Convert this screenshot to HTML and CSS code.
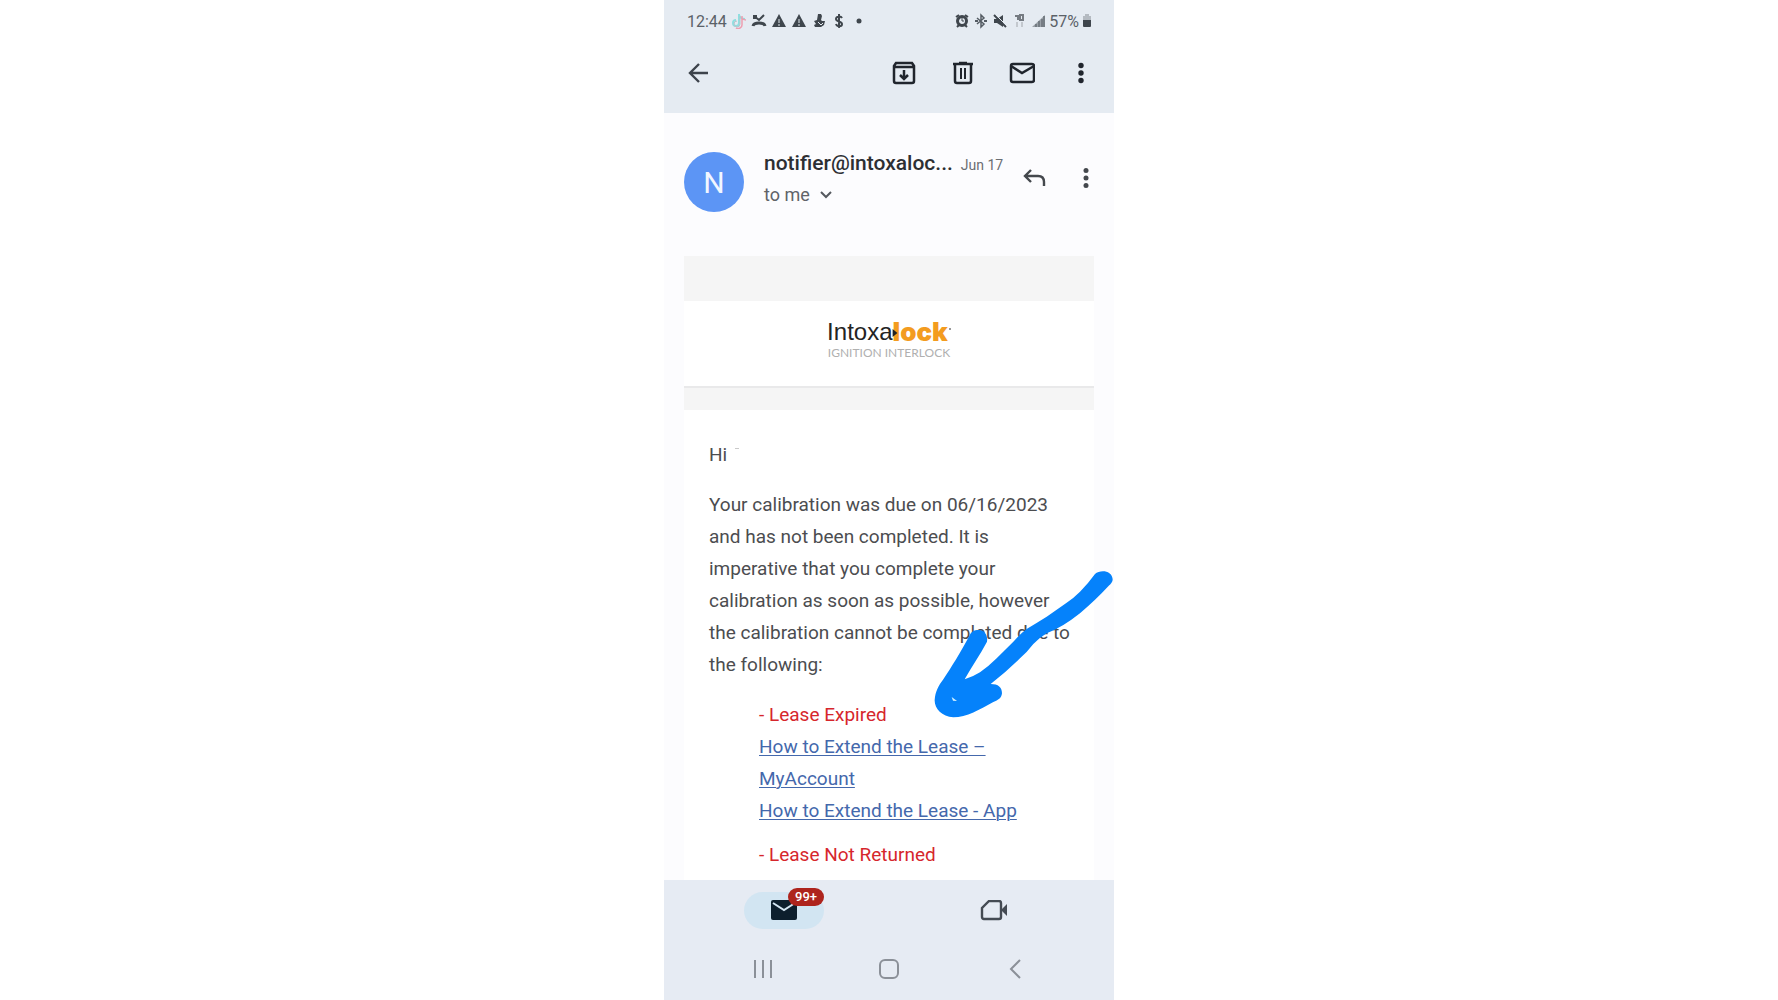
FILE: index.html
```html
<!DOCTYPE html>
<html lang="en">
<head>
<meta charset="utf-8">
<meta name="viewport" content="width=device-width, initial-scale=1">
<title>Mail</title>
<link rel="stylesheet" href="styles.css">
</head>
<body>
<div class="phone">
  <header class="top">
    <div class="status">
      <div class="status-group">
        <time class="clock">12:44</time>
        <svg class="sicon" viewBox="0 0 16 16" fill="none" stroke-width="2"><path d="M8 1v9a3 3 0 1 1-3-3M8 2c1 3 3 4 6 4" stroke="#8edfe0"/><path d="M11 3v8a4 4 0 0 1-6 4M11 5c1 2 2 2 4 2" stroke="#ee9eb0" stroke-width="1.500"/><path d="M9 3v8a3 3 0 1 1-3-3" stroke="#b9c4cc" stroke-width="1"/></svg>
        <svg class="sicon" viewBox="0 0 16 16" fill="none" stroke="#3f464d" stroke-width="2"><path d="M3 3l5 4 5-5M3 6V3h3"/><path d="M2 13c1-4 11-4 12 0" stroke-width="3"/></svg>
        <svg class="sicon" viewBox="0 0 16 16"><path d="M8 1l7 13H1z" fill="#3f464d"/><path d="M8 6v4M8 11v2" stroke="#e5ebf2" stroke-width="1"/></svg>
        <svg class="sicon" viewBox="0 0 16 16"><path d="M8 1l7 13H1z" fill="#3f464d"/><path d="M8 6v4M8 11v2" stroke="#e5ebf2" stroke-width="1"/></svg>
        <svg class="sicon" viewBox="0 0 16 16" fill="#3f464d"><path d="M7 1h3l1 2-1 4 1 1h3l-1 4-3 2H4l-1-2 2-1-2-3 3-1z"/><path d="M7 9l3 3 2-2" stroke="#e5ebf2" fill="none"/></svg>
        <svg class="sicon" viewBox="0 0 16 16" fill="none" stroke="#3f464d" stroke-width="2"><path d="M11 5C10 3 5 3 5 6s6 2 6 5-5 3-6 0M8 1v14"/></svg>
        <svg class="sicon" viewBox="0 0 16 16"><circle cx="8" cy="8" r="2.5" fill="#3f464d"/></svg>
      </div>
      <div class="status-group status-right">
        <svg class="sicon" viewBox="0 0 16 16" fill="none" stroke="#3f464d"><circle cx="8" cy="8" r="4.5" stroke-width="3"/><path d="M2 4l3-2M14 4l-3-2M3 14l2-2M13 14l-2-2" stroke-width="2"/><path d="M8 5v3h2"/></svg>
        <svg class="sicon" viewBox="0 0 16 16" fill="none" stroke="#555c64" stroke-width="1.5"><path d="M4 5l7 6-3 3V2l3 3-7 6"/><path d="M2 8h3M11 8h3" stroke-width="2"/></svg>
        <svg class="sicon" viewBox="0 0 16 16"><path d="M2 6h3l6-4v12l-6-4H2z" fill="#3f464d"/><path d="M2 2l12 12" stroke="#3f464d" stroke-width="2"/><path d="M4 2l11 11" stroke="#e5ebf2"/></svg>
        <svg class="sicon" viewBox="0 0 16 16" fill="none" stroke-width="2"><path d="M4 3h3v4M9 2h3v5H9z" stroke="#757b82"/><path d="M6 9v5M11 14V9" stroke="#c3c8ce"/></svg>
        <svg class="sicon" viewBox="0 0 16 16"><path d="M2 14L15 2v12z" fill="#9aa1a8"/><path d="M6 14v-3M9 14V8M12 14V6M14 14V3" stroke="#6a7178" stroke-width="1.500"/></svg>
        <span class="clock">57%</span>
        <svg class="battery" viewBox="0 0 10 16"><path d="M3 1h4v2h2v4H1V3h2z" fill="#b4bac1"/><path d="M1 7h8v6q0 1-1 1H2q-1 0-1-1z" fill="#3f464d"/></svg>
      </div>
    </div>
    <div class="toolbar">
      <button class="icon-btn back" aria-label="Back"><svg width="24" height="24" viewBox="0 0 24 24" fill="none" stroke="#3d434b" stroke-width="2.4"><path d="M22 12H4M13 3l-9 9 9 9"/></svg></button>
      <button class="icon-btn" aria-label="Archive"><svg width="26" height="26" viewBox="0 0 26 26" fill="none" stroke="#20252d" stroke-width="2.5"><path d="M3 6l2-3h16l2 3v15q0 2-2 2H5q-2 0-2-2zM3 7h20M13 10v8M9 15l4 4 4-4"/></svg></button>
      <button class="icon-btn" aria-label="Delete"><svg width="26" height="26" viewBox="0 0 26 26" fill="none" stroke="#20252d" stroke-width="2.5"><path d="M3 4h20M9 3h8M5 5v16q0 2 2 2h12q2 0 2-2V5"/><path d="M11 8v11M15 8v11" stroke-width="2"/></svg></button>
      <button class="icon-btn" aria-label="Mark unread"><svg width="26" height="26" viewBox="0 0 26 26" fill="none" stroke="#20252d" stroke-width="2.5"><rect x="2" y="4" width="23" height="18" rx="2"/><path d="M2 6l11 7 12-7"/></svg></button>
      <button class="icon-btn" aria-label="More options"><svg width="24" height="24" viewBox="0 0 24 24" fill="#20252d"><circle cx="12" cy="4.500" r="2.700"/><circle cx="12" cy="12" r="2.700"/><circle cx="12" cy="19.500" r="2.700"/></svg></button>
    </div>
  </header>

  <main class="mail">
    <section class="sender">
      <div class="avatar">N</div>
      <div class="meta">
        <div class="meta-row"><strong class="from">notifier@intoxaloc...</strong><span class="date">Jun 17</span></div>
        <button class="to">to me <svg width="12" height="8" viewBox="0 0 12 8" fill="none" stroke="#55595f" stroke-width="2"><path d="M1 1l5 5 5-5"/></svg></button>
      </div>
      <div class="actions">
        <button class="icon-btn" aria-label="Reply"><svg width="24" height="20" viewBox="0 0 24 20" fill="none" stroke="#44484d" stroke-width="2.400"><path d="M9 2L3 8l6 6M3 8h13q6 0 6 6v4"/></svg></button>
        <button class="icon-btn" aria-label="More"><svg width="24" height="24" viewBox="0 0 24 24" fill="#44484d"><circle cx="12" cy="4.500" r="2.500"/><circle cx="12" cy="12" r="2.500"/><circle cx="12" cy="19.500" r="2.500"/></svg></button>
      </div>
    </section>

    <article class="letter">
      <div class="brand">
        <div class="logo"><span class="logo-a">Intoxa</span><span class="logo-b">lock</span><svg class="logo-dot" viewBox="0 0 3 14"><circle cx="2" cy="4" r="1" fill="#777"/></svg><svg class="logo-arrow" viewBox="0 0 6 10"><path d="M0 0l6 5-6 5z" fill="#222"/></svg></div>
        <div class="tagline">IGNITION INTERLOCK</div>
      </div>
      <div class="copy">
        <p>Hi <span class="mark"></span></p>
        <p>Your calibration was due on 06/16/2023 and has not been completed. It is imperative that you complete your calibration as soon as possible, however the calibration cannot be completed due to the following:</p>
        <ul class="issues">
          <li><span class="issue">- Lease Expired</span><a href="#myaccount">How to Extend the Lease – MyAccount</a><a href="#app">How to Extend the Lease - App</a></li>
          <li><span class="issue">- Lease Not Returned</span></li>
        </ul>
      </div>
    </article>
  </main>

  <footer class="bottom">
    <nav class="tabs">
      <a class="tab tab-on" href="#mail" aria-label="Mail"><svg width="26" height="22" viewBox="0 0 26 22"><rect y="0" width="26" height="20" rx="2" fill="#0d1f2d"/><path d="M2 3l11 7 11-7" fill="none" stroke="#d4e6f3" stroke-width="2"/></svg><span class="badge">99+</span></a>
      <a class="tab" href="#meet" aria-label="Meet"><svg width="28" height="22" viewBox="0 0 28 22"><path d="M9 1h10q2 0 2 2v14q0 2-2 2H4q-2 0-2-2V8z" fill="none" stroke="#454b53" stroke-width="2.400"/><path d="M21 10l6-6v12z" fill="#454b53"/></svg></a>
    </nav>
    <div class="sysnav">
      <button aria-label="Recents"><svg width="20" height="20" viewBox="0 0 20 20" stroke="#8b9098" stroke-width="2"><path d="M2 1v18M10 1v18M18 1v18"/></svg></button>
      <button aria-label="Home"><svg width="20" height="20" viewBox="0 0 20 20" fill="none" stroke="#8b9098" stroke-width="2"><rect x="1" y="1" width="18" height="18" rx="5"/></svg></button>
      <button aria-label="Back"><svg width="12" height="20" viewBox="0 0 12 20" fill="none" stroke="#8b9098" stroke-width="2"><path d="M11 1l-9 9 9 9"/></svg></button>
    </div>
  </footer>

  <svg class="scribble" viewBox="0 0 660 540" aria-hidden="true"><path fill="#0582fb" d="M585 72C600 58 636 60 638 88C638 98 630 104 622 112Q590 147 540 190Q515 210 490 225Q465 240 440 250Q420 262 400 282Q380 308 360 325Q320 365 272 402C295 402 306 412 306 430C304 445 295 450 280 456C240 478 200 502 160 502C125 500 103 475 104 450C106 425 115 408 130 388C155 350 180 310 208 258C215 240 228 240 240 240C255 242 264 258 261 275C240 315 215 350 194 388Q218 381 240 367Q265 350 290 325L340 275Q362 250 380 237Q408 220 440 200L500 158Q520 145 540 125Q565 100 585 72Z"/><path fill="#d8f4ff" d="M155 441l16 12-12-1z"/></svg>
</div>
</body>
</html>
```
FILE: styles.css
```css
* { box-sizing: border-box; }
body { margin: 0; background: #fff; font-family: Roboto, "Liberation Sans", sans-serif; color: #4c4d50; }
button { border: 0; background: none; padding: 0; font: inherit; color: inherit; }
svg { display: block; flex: none; }

.phone { position: relative; display: flex; flex-direction: column; width: 100%; max-width: 450px; min-height: 100vh; margin: 0 auto; background: #fcfcfe; }

.top { background: #e5ebf2; padding-bottom: 9px; }
.status { display: flex; justify-content: space-between; align-items: center; height: 42px; padding: 0 22px 0 23px; }
.status-group { display: flex; align-items: center; gap: 4px; }
.status-right { gap: 3px; }
.sicon { width: 16px; height: 16px; }
.battery { width: 10px; height: 16px; }
.clock { font-size: 16px; color: #5b6168; }
.toolbar { display: flex; align-items: center; gap: 27px; height: 62px; padding: 0 17px 0 18px; }
.icon-btn { display: flex; align-items: center; justify-content: center; width: 32px; height: 32px; }
.back { margin-right: auto; }

.mail { flex: 1; }
.sender { display: flex; align-items: flex-start; padding: 39px 12px 44px 20px; }
.avatar { display: flex; align-items: center; justify-content: center; flex: none; width: 60px; height: 60px; margin-right: 20px; border-radius: 50%; background: #5c95f5; color: #f2f7ff; font-size: 30px; }
.meta { display: flex; flex-direction: column; align-items: flex-start; gap: 8px; flex: 1; min-width: 0; line-height: 22px; }
.meta-row { display: flex; align-items: baseline; gap: 8px; white-space: nowrap; }
.from { font-size: 21px; font-weight: 500; color: #2d2f33; }
.date { font-size: 14px; color: #6b6e73; }
.to { display: flex; align-items: center; gap: 10px; font-size: 18px; color: #606368; }
.actions { display: flex; gap: 20px; padding-top: 10px; }

.letter { margin: 0 20px; background: #fff; }
.brand { display: flex; flex-direction: column; align-items: center; padding: 16px 0 28px; border-top: 45px solid #f5f5f5; border-bottom: 22px solid #f5f5f5; box-shadow: inset 0 -2px #e9e9ea; }
.logo { position: relative; display: flex; align-items: center; line-height: 29px; font-size: 24px; }
.logo-a { font-family: "Liberation Sans", Arial, sans-serif; color: #242424; }
.logo-arrow { position: absolute; left: 65px; top: 12px; width: 6px; height: 8px; }
.logo-b { font-family: Inter, sans-serif; font-size: 26px; font-weight: 900; color: #f39c1f; }
.logo-dot { width: 3px; height: 14px; }
.tagline { font-family: Lato, sans-serif; font-size: 12px; line-height: 14px; color: #b0b0b0; }

.copy { padding: 29px 20px 9px 25px; font-size: 19px; line-height: 32px; }
.copy p { margin: 0 0 18px; }
.mark { display: inline-block; width: 4px; height: 1px; margin-left: 3px; vertical-align: 12px; background: #c9c9c9; }
.issues { margin: 0; padding: 0 0 0 50px; list-style: none; }
.issues li + li { margin-top: 12px; }
.issue { display: block; color: #d6262c; }
.issues a { display: block; color: #4468ac; text-underline-offset: 2px; text-decoration-thickness: 1px; }

.bottom { background: #e6ebf3; }
.tabs { display: flex; justify-content: space-around; align-items: flex-start; height: 58px; padding: 12px 15px 0; }
.tab { position: relative; display: flex; align-items: center; justify-content: center; width: 80px; height: 37px; border-radius: 19px; }
.tab-on { background: #d2e5f2; }
.badge { position: absolute; top: -4px; right: 0; width: 36px; border-radius: 9px; background: #ae241d; color: #fff; font-size: 13px; line-height: 18px; font-weight: 500; text-align: center; }
.sysnav { display: grid; grid-template-columns: repeat(3, 1fr); height: 62px; padding: 0 36px; }
.sysnav button { display: flex; align-items: center; justify-content: center; }

.scribble { position: absolute; left: 236px; top: 550px; width: 220px; height: 180px; }
```
